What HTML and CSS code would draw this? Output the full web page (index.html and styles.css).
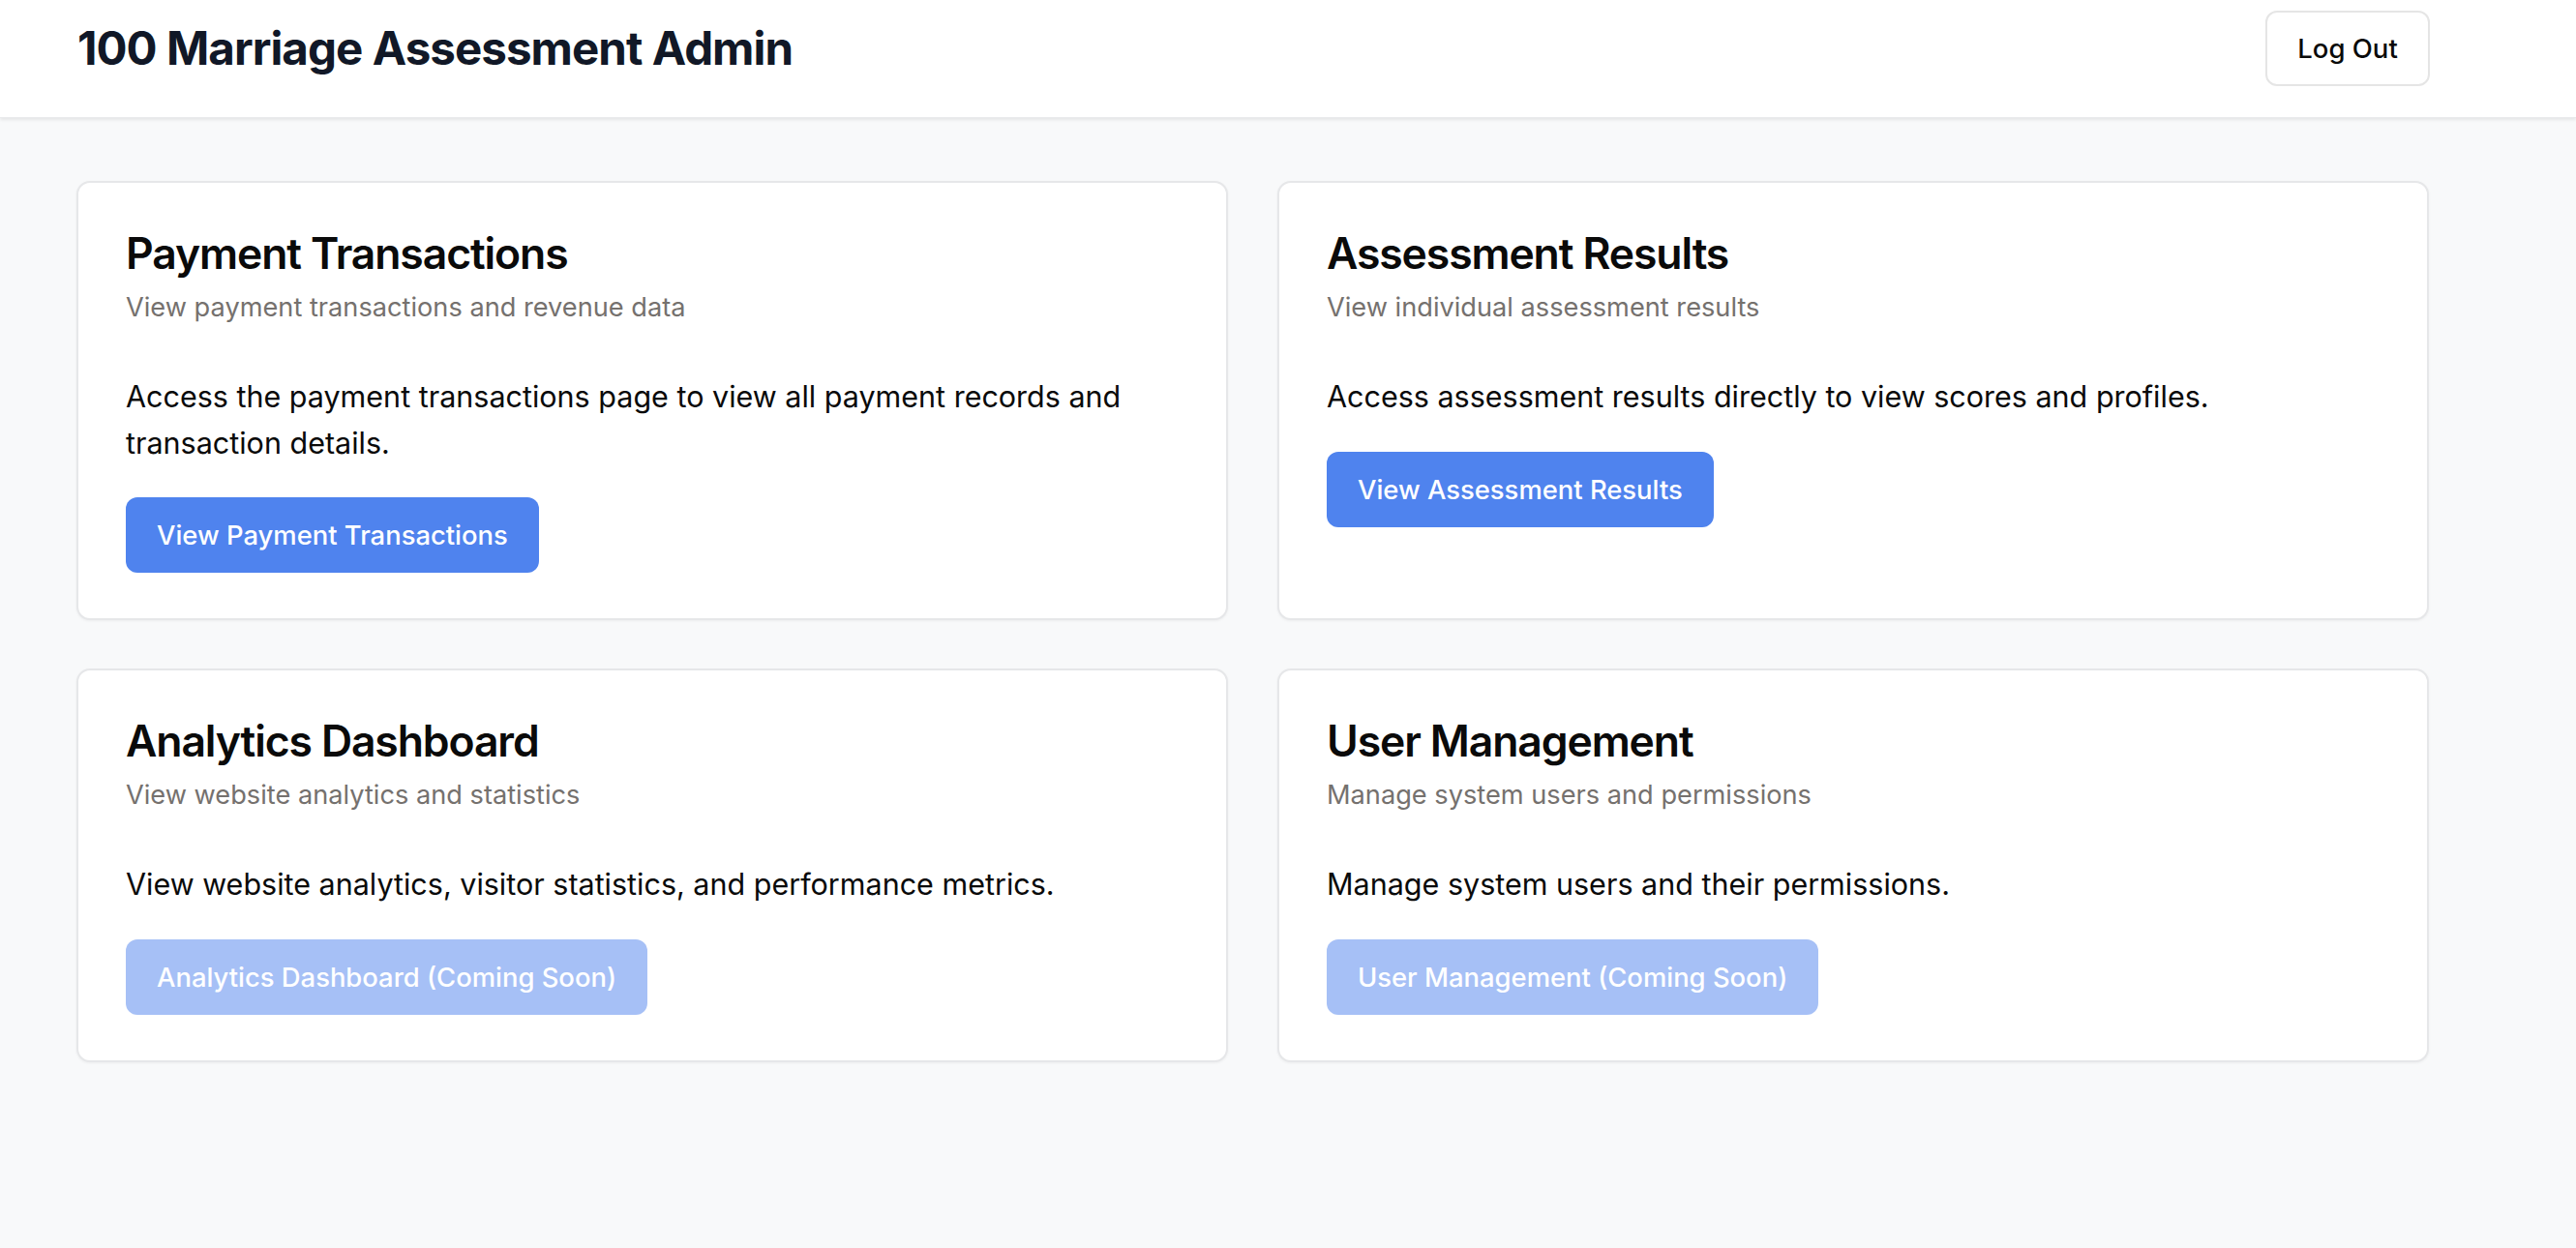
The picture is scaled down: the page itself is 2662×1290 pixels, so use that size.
FILE: index.html
```html
<!DOCTYPE html>
<html lang="en">
<head>
<meta charset="utf-8">
<title>100 Marriage Assessment Admin</title>
<link rel="stylesheet" href="styles.css">
</head>
<body>
<header class="topbar">
  <div class="topbar-inner">
    <h1 class="brand">100 Marriage Assessment Admin</h1>
    <button class="btn-outline" type="button">Log Out</button>
  </div>
</header>
<main class="content">
  <div class="grid">
    <section class="card">
      <h2 class="card-title">Payment Transactions</h2>
      <p class="card-desc">View payment transactions and revenue data</p>
      <p class="card-body">Access the payment transactions page to view all payment records and transaction details.</p>
      <div class="card-actions"><button class="btn-primary" type="button">View Payment Transactions</button></div>
    </section>
    <section class="card">
      <h2 class="card-title">Assessment Results</h2>
      <p class="card-desc">View individual assessment results</p>
      <p class="card-body">Access assessment results directly to view scores and profiles.</p>
      <div class="card-actions"><button class="btn-primary" type="button">View Assessment Results</button></div>
    </section>
    <section class="card">
      <h2 class="card-title">Analytics Dashboard</h2>
      <p class="card-desc">View website analytics and statistics</p>
      <p class="card-body">View website analytics, visitor statistics, and performance metrics.</p>
      <div class="card-actions"><button class="btn-primary is-disabled" type="button" disabled>Analytics Dashboard (Coming Soon)</button></div>
    </section>
    <section class="card">
      <h2 class="card-title">User Management</h2>
      <p class="card-desc">Manage system users and permissions</p>
      <p class="card-body">Manage system users and their permissions.</p>
      <div class="card-actions"><button class="btn-primary is-disabled" type="button" disabled>User Management (Coming Soon)</button></div>
    </section>
  </div>
</main>
</body>
</html>
```

FILE: styles.css
```css
* { box-sizing: border-box; }
html, body { margin: 0; padding: 0; }
body {
  background: #f8f9fa;
  font-family: Inter, "Noto Sans", "Liberation Sans", sans-serif;
  color: #0a0a0a;
  min-height: 1290px;
}
.topbar {
  background: #ffffff;
  height: 122px;
  box-shadow: 0 2px 3px rgba(0,0,0,0.08);
  border-bottom: 1px solid #e9eaec;
}
.topbar-inner {
  width: 2431px;
  margin-left: 80px;
  padding-top: 10px;
  display: flex;
  align-items: center;
  justify-content: space-between;
}
.brand {
  margin: 0;
  font-size: 47.5px;
  font-weight: 700;
  letter-spacing: -0.02em;
  color: #111827;
  line-height: 80px;
}
.btn-outline {
  height: 78px;
  width: 170px;
  background: #ffffff;
  border: 2px solid #e5e5e5;
  border-radius: 12px;
  font-family: inherit;
  font-size: 27.5px;
  font-weight: 500;
  color: #0a0a0a;
}
.content {
  padding: 65px 0 0 79px;
}
.grid {
  width: 2432px;
  display: grid;
  grid-template-columns: 1190px 1190px;
  column-gap: 51px;
  row-gap: 50px;
}
.card {
  background: #ffffff;
  border: 2px solid #e6e7e9;
  border-radius: 14px;
  box-shadow: 0 1px 3px rgba(0,0,0,0.05);
  padding: 49px 49px 47px;
  display: flex;
  flex-direction: column;
}
.card-title {
  margin: 0;
  font-size: 44.5px;
  font-weight: 600;
  letter-spacing: -0.025em;
  line-height: 48px;
  color: #0a0a0a;
}
.card-desc {
  margin: 12px 0 0;
  font-size: 27.2px;
  line-height: 40px;
  color: #75716e;
}
.card-body {
  margin: 48px 0 0;
  font-size: 30.5px;
  line-height: 47.5px;
  color: #0a0a0a;
}
.card-actions {
  margin-top: 33px;
  display: flex;
}
.btn-primary {
  height: 78px;
  padding: 0 32px;
  background: #4f83ee;
  color: #ffffff;
  border: none;
  border-radius: 12px;
  font-family: inherit;
  font-size: 27.4px;
  font-weight: 500;
}
.btn-primary.is-disabled {
  opacity: 0.5;
}
```
